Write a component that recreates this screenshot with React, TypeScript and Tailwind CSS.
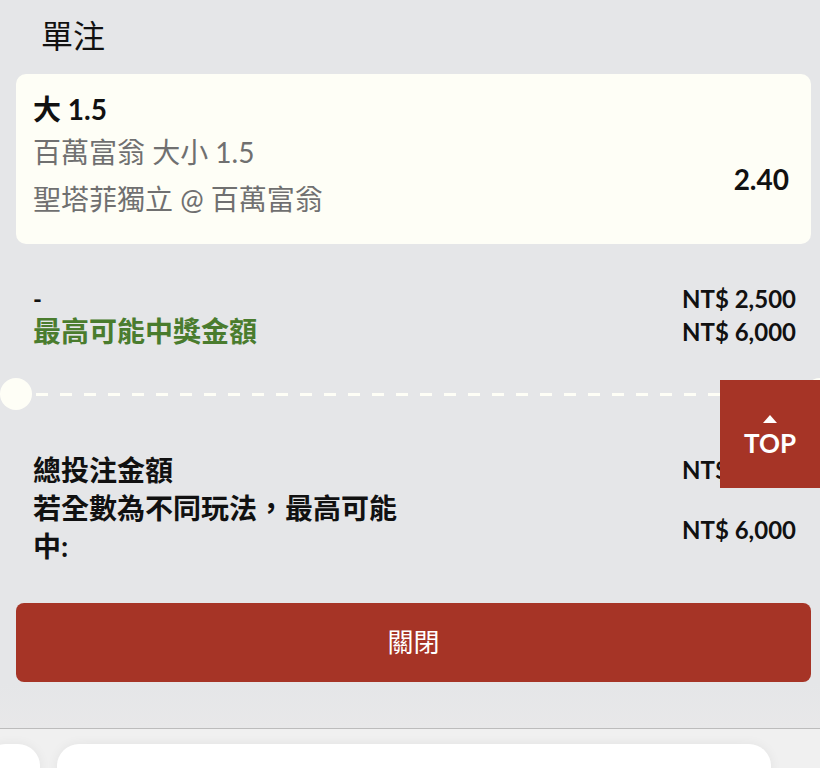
import React from "react";

const font = { fontFamily: 'Lato, "Noto Sans CJK TC", sans-serif' };

const App: React.FC = () => {
  return (
    <div
      className="relative w-[820px] h-[768px] overflow-hidden bg-[#e5e6e8] text-[#111]"
      style={font}>
      <div className="h-[728px] flex flex-col">
        <div className="pl-[41px] pt-[15px] h-[74px] text-[32px] leading-[42px]">單注</div>

        {/* selection card */}
        <div className="ml-4 mr-[9px] h-[170px] rounded-[10px] bg-[#fefef6] flex justify-between pl-[17px] pr-[22px] pt-[15px]">
          <div>
            <div className="font-bold text-[28px] leading-[40px]">大 1.5</div>
            <div className="mt-[3px] text-[28px] leading-[40px] text-[#707070]">百萬富翁 大小 1.5</div>
            <div className="mt-[7px] text-[28px] leading-[40px] text-[#707070]">聖塔菲獨立 @ 百萬富翁</div>
          </div>
          <div className="pt-[70px] font-bold text-[28px] leading-[40px]">2.40</div>
        </div>

        {/* stake row */}
        <div className="mt-[38px] ml-4 mr-[9px] pl-[17px] pr-[15px] flex justify-between">
          <div className="font-bold leading-[33px]">
            <div className="text-[24px]">-</div>
            <div className="text-[28px] text-[#4a7c2e]">最高可能中獎金額</div>
          </div>
          <div className="font-bold text-[24px] leading-[33px] text-right">
            <div>NT$ 2,500</div>
            <div>NT$ 6,000</div>
          </div>
        </div>

        {/* ticket divider */}
        <div className="mt-[30px] flex items-center h-[32px]">
          <div className="w-8 h-8 shrink-0 rounded-full bg-[#fefef6]" />
          <div className="flex-1 ml-[4px] h-[3px] bg-[repeating-linear-gradient(90deg,#fefef6_0_12px,transparent_12px_24px)]" />
          <div className="w-8 h-8 shrink-0 rounded-full bg-[#fefef6] -mr-4" />
        </div>

        {/* totals */}
        <div className="mt-[41px] ml-4 mr-[9px] pl-[17px] pr-[15px] flex flex-col">
          <div className="flex justify-between items-center font-bold leading-[38px]">
            <div className="text-[28px]">總投注金額</div>
            <div className="text-[24px]">NT$ 2,500</div>
          </div>
          <div className="flex justify-between items-center font-bold leading-[38px]">
            <div className="w-1/2 text-[28px]">若全數為不同玩法，最高可能中:</div>
            <div className="text-[24px] pt-[6px]">NT$ 6,000</div>
          </div>
        </div>

        <button className="mt-[38px] ml-4 mr-[9px] h-[79px] rounded-[8px] bg-[#a63426] text-white text-[26px] flex items-center justify-center">
          關閉
        </button>

        <div className="flex-1 bg-gradient-to-b from-[#e5e6e8] to-[#e8e8e9]" />
      </div>

      {/* bottom bar */}
      <div className="h-[40px] border-t border-[#bcbcbc] bg-[#f0f0f0] flex gap-[17px] pt-[15px]">
        <div className="w-[56px] -ml-[16px] h-[40px] rounded-t-[22px] bg-white shadow-[0_0_12px_rgba(0,0,0,0.06)]" />
        <div className="w-[714px] h-[40px] rounded-t-[22px] bg-white shadow-[0_0_12px_rgba(0,0,0,0.06)]" />
      </div>

      {/* back to top */}
      <div className="absolute right-0 top-[380px] w-[100px] h-[108px] bg-[#a63426] text-white flex flex-col items-center justify-center">
        <div className="w-0 h-0 border-l-[7px] border-r-[7px] border-b-[8px] border-l-transparent border-r-transparent border-b-white mt-[6px]" />
        <div className="font-bold text-[26px] leading-[32px] mt-[4px]">TOP</div>
      </div>
    </div>
  );
};

export default App;
